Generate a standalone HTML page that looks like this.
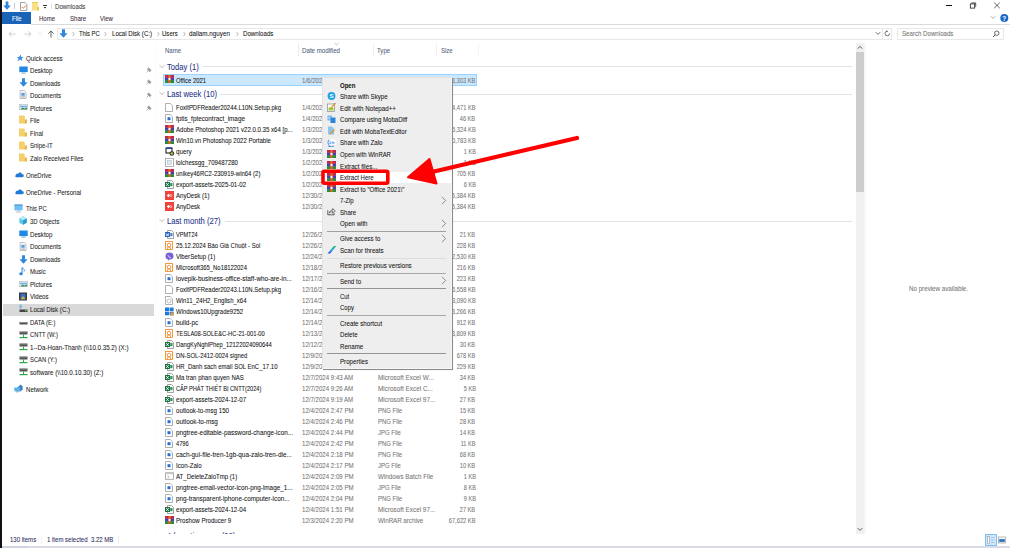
<!DOCTYPE html><html><head><meta charset="utf-8"><style>
html,body{margin:0;padding:0}
body{width:1010px;height:548px;overflow:hidden;position:relative;background:#fff;font-family:'Liberation Sans',sans-serif}
.t{position:absolute;white-space:pre;transform-origin:0 50%;-webkit-text-stroke:0.06px currentColor}
.r{transform-origin:100% 50%}
.b{position:absolute}
#files{position:absolute;left:156px;top:40px;width:700px;height:494px;overflow:hidden}
</style></head><body>
<div class="b" style="left:0px;top:0px;width:2px;height:548px;background:#111"></div>
<svg class="b" style="left:2.5px;top:1px" width="8" height="9" viewBox="0 0 8 9"><path d="M2.6 0.5H5.4V4.5H7.9L4 8.7L0.1 4.5H2.6Z" fill="#2f88e0"/></svg>
<div class="b" style="left:14px;top:3px;width:1px;height:6px;background:#c8c8c8"></div>
<svg class="b" style="left:19.5px;top:2px" width="8" height="9" viewBox="0 0 8 9"><path d="M0.5 0.5H5L6.8 2.3V8.5H0.5Z" fill="#fff" stroke="#8a8a8a" stroke-width="0.8"/><path d="M1.8 5L3.3 6.3L6 3.5" stroke="#e06a3a" stroke-width="0.9" fill="none"/></svg>
<svg class="b" style="left:32px;top:2px" width="8" height="9" viewBox="0 0 8 9"><rect x="0" y="0" width="5.8" height="8.5" fill="#f9df88"/><rect x="0" y="0" width="5.8" height="0.9" fill="#ecc850"/><rect x="5.3" y="4.8" width="1.6" height="3.7" fill="#e8c048"/></svg>
<svg class="b" style="left:42px;top:3px" width="6" height="6" viewBox="0 0 6 6"><rect x="1" y="2" width="4" height="0.9" fill="#222"/><path d="M1.6 4L3 5.5L4.4 4Z" fill="#222"/></svg>
<div class="b" style="left:51px;top:3px;width:1px;height:6px;background:#e4e4e4"></div>
<div class="t" style="left:54.80px;top:1.85px;line-height:10px;font-size:7.4px;color:#3a3a3a;transform:scaleX(0.832);">Downloads</div>
<div class="b" style="left:946px;top:5px;width:6px;height:1px;background:#111"></div>
<svg class="b" style="left:969px;top:2px" width="8" height="7" viewBox="0 0 8 7"><rect x="1.3" y="1.9" width="4.4" height="4.2" fill="none" stroke="#111" stroke-width="0.75"/><path d="M2.4 0.9H6.7V4.9" fill="none" stroke="#111" stroke-width="0.7"/></svg>
<svg class="b" style="left:993px;top:2px" width="8" height="7" viewBox="0 0 8 7"><path d="M1.2 0.6L6.8 6.2M6.8 0.6L1.2 6.2" stroke="#222" stroke-width="0.7"/></svg>
<div class="b" style="left:2px;top:12px;width:29px;height:12px;background:#1a64b8"></div>
<div class="t" style="left:11.50px;top:14.05px;line-height:10px;font-size:7.4px;color:#fff;transform:scaleX(0.808);">File</div>
<div class="t" style="left:38.50px;top:14.25px;line-height:10px;font-size:7.4px;color:#3b2b3b;transform:scaleX(0.819);">Home</div>
<div class="t" style="left:69.60px;top:14.25px;line-height:10px;font-size:7.4px;color:#3b2b3b;transform:scaleX(0.822);">Share</div>
<div class="t" style="left:99.70px;top:14.25px;line-height:10px;font-size:7.4px;color:#3b2b3b;transform:scaleX(0.816);">View</div>
<div class="b" style="left:31px;top:24px;width:979px;height:1px;background:#dadbdc"></div>
<svg class="b" style="left:990px;top:15px" width="6" height="5" viewBox="0 0 6 5"><path d="M0.8 1.2L3 3.4L5.2 1.2" stroke="#8a8a8a" stroke-width="0.7" fill="none"/></svg>
<svg class="b" style="left:1000px;top:14px" width="9" height="8" viewBox="0 0 9 8"><circle cx="4.3" cy="4" r="4" fill="#1769c5"/><text x="4.3" y="6.6" font-size="6.5" font-weight="bold" text-anchor="middle" fill="#fff" font-family="Liberation Sans">?</text></svg>
<svg class="b" style="left:8px;top:31px" width="8" height="6" viewBox="0 0 8 6"><path d="M7.5 3H1M3.5 0.5L1 3L3.5 5.5" stroke="#c4c4c4" stroke-width="0.8" fill="none"/></svg>
<svg class="b" style="left:24px;top:31px" width="8" height="6" viewBox="0 0 8 6"><path d="M0.5 3H7M4.5 0.5L7 3L4.5 5.5" stroke="#c4c4c4" stroke-width="0.8" fill="none"/></svg>
<svg class="b" style="left:38px;top:32px" width="4" height="3" viewBox="0 0 4 3"><path d="M0.3 0.8L2 2.3L3.7 0.8" stroke="#c8c8c8" stroke-width="0.6" fill="none"/></svg>
<svg class="b" style="left:47px;top:30px" width="8" height="8" viewBox="0 0 8 8"><path d="M4 7.5V1M1.3 3.7L4 1L6.7 3.7" stroke="#555" stroke-width="0.9" fill="none"/></svg>
<div class="b" style="left:57px;top:28px;width:835px;height:12px;border:1px solid #e8e8e8;box-sizing:border-box;border-right:none"></div>
<svg class="b" style="left:59px;top:29px" width="9" height="9" viewBox="0 0 9 9"><path d="M3 0.3H6V4.3H8.6L4.5 8.7L0.4 4.3H3Z" fill="#2f88e0"/></svg>
<svg class="b" style="left:71.5px;top:31px" width="3" height="6" viewBox="0 0 3 6"><path d="M0.6 1L2.2 3L0.6 5" stroke="#777" stroke-width="0.55" fill="none"/></svg>
<svg class="b" style="left:104.2px;top:31px" width="3" height="6" viewBox="0 0 3 6"><path d="M0.6 1L2.2 3L0.6 5" stroke="#777" stroke-width="0.55" fill="none"/></svg>
<svg class="b" style="left:156.5px;top:31px" width="3" height="6" viewBox="0 0 3 6"><path d="M0.6 1L2.2 3L0.6 5" stroke="#777" stroke-width="0.55" fill="none"/></svg>
<svg class="b" style="left:182.6px;top:31px" width="3" height="6" viewBox="0 0 3 6"><path d="M0.6 1L2.2 3L0.6 5" stroke="#777" stroke-width="0.55" fill="none"/></svg>
<svg class="b" style="left:236.2px;top:31px" width="3" height="6" viewBox="0 0 3 6"><path d="M0.6 1L2.2 3L0.6 5" stroke="#777" stroke-width="0.55" fill="none"/></svg>
<div class="t" style="left:79.00px;top:29.05px;line-height:10px;font-size:7.4px;color:#111;transform:scaleX(0.787);">This PC</div>
<div class="t" style="left:111.60px;top:29.05px;line-height:10px;font-size:7.4px;color:#111;transform:scaleX(0.826);">Local Disk (C:)</div>
<div class="t" style="left:162.40px;top:29.05px;line-height:10px;font-size:7.4px;color:#111;transform:scaleX(0.819);">Users</div>
<div class="t" style="left:189.10px;top:29.05px;line-height:10px;font-size:7.4px;color:#111;transform:scaleX(0.851);">dailam.nguyen</div>
<div class="t" style="left:242.60px;top:29.05px;line-height:10px;font-size:7.4px;color:#111;transform:scaleX(0.832);">Downloads</div>
<svg class="b" style="left:875px;top:31px" width="6" height="5" viewBox="0 0 6 5"><path d="M0.8 1.2L3 3.4L5.2 1.2" stroke="#444" stroke-width="0.8" fill="none"/></svg>
<div class="b" style="left:882px;top:28px;width:1px;height:12px;background:#e8e8e8"></div>
<svg class="b" style="left:884px;top:30px" width="7" height="7" viewBox="0 0 7 7"><path d="M5.6 3.5A2.3 2.3 0 1 1 3.3 1.2" stroke="#555" stroke-width="0.8" fill="none"/><path d="M2.6 0.2L4 1.2L2.6 2.3" fill="#555"/></svg>
<div class="b" style="left:891px;top:28px;width:1px;height:12px;background:#e8e8e8"></div>
<div class="b" style="left:897px;top:28px;width:107px;height:12px;border:1px solid #e8e8e8;box-sizing:border-box"></div>
<div class="t" style="left:902.30px;top:29.05px;line-height:10px;font-size:7.4px;color:#707070;transform:scaleX(0.829);">Search Downloads</div>
<svg class="b" style="left:992px;top:30px" width="8" height="8" viewBox="0 0 8 8"><circle cx="4.8" cy="3.2" r="2.2" stroke="#444" stroke-width="0.8" fill="none"/><path d="M3.2 4.8L1 7" stroke="#444" stroke-width="0.9"/></svg>
<div class="b" style="left:155px;top:43px;width:1px;height:491px;background:#fbfbfb"></div>
<div class="b" style="left:3px;top:304px;width:151px;height:12px;background:#d9d9d9"></div>
<svg class="b" style="left:15.6px;top:54px" width="8" height="8" viewBox="0 0 8 8"><path d="M4.6 0.6L5.3 2.9L7.6 3.2L5.8 4.6L6.2 7L4.2 5.6L1.4 7.6L2.6 4.5L0.6 3L3.1 2.9Z" fill="#3a8ee6"/></svg>
<div class="t" style="left:25.50px;top:53.55px;line-height:10px;font-size:7.4px;color:#1a1a1a;transform:scaleX(0.832);">Quick access</div>
<svg class="b" style="left:18.8px;top:66px" width="9" height="8" viewBox="0 0 9 8"><rect x="0.3" y="0.5" width="8.4" height="5.6" fill="#1e88e5"/><rect x="2.5" y="6.6" width="4" height="1" fill="#7ab"/></svg>
<div class="t" style="left:29.60px;top:66.25px;line-height:10px;font-size:7.4px;color:#1a1a1a;transform:scaleX(0.827);">Desktop</div>
<svg class="b" style="left:18.8px;top:78px" width="9" height="9" viewBox="0 0 9 9"><path d="M3 0.3H6V4.3H8.6L4.5 8.7L0.4 4.3H3Z" fill="#2f88e0"/></svg>
<div class="t" style="left:29.60px;top:78.55px;line-height:10px;font-size:7.4px;color:#1a1a1a;transform:scaleX(0.832);">Downloads</div>
<svg class="b" style="left:18.8px;top:90px" width="8" height="9" viewBox="0 0 8 9"><path d="M1.2 0.5H5.2L7 2.3V8.5H1.2Z" fill="#fff" stroke="#a0a0a0" stroke-width="0.7"/><rect x="2.3" y="2.8" width="3.4" height="3" fill="#5aa0e0"/><path d="M2.3 7H5.8" stroke="#6a6a6a" stroke-width="0.7"/></svg>
<div class="t" style="left:29.60px;top:91.15px;line-height:10px;font-size:7.4px;color:#1a1a1a;transform:scaleX(0.832);">Documents</div>
<svg class="b" style="left:18.8px;top:104px" width="9" height="6" viewBox="0 0 9 6"><rect x="0.6" y="0.4" width="7.8" height="5.4" fill="#fff" stroke="#b0b0b0" stroke-width="0.6"/><rect x="1.1" y="1.6" width="6.8" height="1.8" fill="#6aaee8"/><path d="M1.1 5.4L3.5 3.4L5.5 4.4L7.9 3.2V5.4Z" fill="#3a8a5a"/></svg>
<div class="t" style="left:29.60px;top:103.65px;line-height:10px;font-size:7.4px;color:#1a1a1a;transform:scaleX(0.828);">Pictures</div>
<svg class="b" style="left:18.8px;top:115px" width="8" height="9" viewBox="0 0 8 9"><path d="M0 0.5H5L5.8 1.5V8.5H0Z" fill="#f5cf6a"/><rect x="5.5" y="4.5" width="2.5" height="4" fill="#e8b84a"/></svg>
<div class="t" style="left:29.60px;top:116.15px;line-height:10px;font-size:7.4px;color:#1a1a1a;transform:scaleX(0.808);">File</div>
<svg class="b" style="left:18.8px;top:128px" width="8" height="9" viewBox="0 0 8 9"><path d="M0 0.5H5L5.8 1.5V8.5H0Z" fill="#f5cf6a"/><rect x="5.5" y="4.5" width="2.5" height="4" fill="#e8b84a"/></svg>
<div class="t" style="left:29.60px;top:128.75px;line-height:10px;font-size:7.4px;color:#1a1a1a;transform:scaleX(0.818);">Final</div>
<svg class="b" style="left:18.8px;top:141px" width="8" height="9" viewBox="0 0 8 9"><path d="M0 0.5H5L5.8 1.5V8.5H0Z" fill="#f5cf6a"/><rect x="5.5" y="4.5" width="2.5" height="4" fill="#e8b84a"/></svg>
<div class="t" style="left:29.60px;top:141.35px;line-height:10px;font-size:7.4px;color:#1a1a1a;transform:scaleX(0.813);">Snipe-IT</div>
<svg class="b" style="left:18.8px;top:153px" width="8" height="9" viewBox="0 0 8 9"><path d="M0 0.5H5L5.8 1.5V8.5H0Z" fill="#f5cf6a"/><rect x="5.5" y="4.5" width="2.5" height="4" fill="#e8b84a"/></svg>
<div class="t" style="left:29.60px;top:154.05px;line-height:10px;font-size:7.4px;color:#1a1a1a;transform:scaleX(0.822);">Zalo Received Files</div>
<svg class="b" style="left:146px;top:67px" width="6" height="6" viewBox="0 0 6 6"><path d="M1.8 1.5L4.5 4.2M2.8 0.8L5.2 3.2L3.6 4.8L1.2 2.4Z" fill="#9a9a9a" stroke="#9a9a9a" stroke-width="0.5"/><path d="M2.2 3.8L0.5 5.5" stroke="#9a9a9a" stroke-width="0.7"/></svg>
<svg class="b" style="left:146px;top:79px" width="6" height="6" viewBox="0 0 6 6"><path d="M1.8 1.5L4.5 4.2M2.8 0.8L5.2 3.2L3.6 4.8L1.2 2.4Z" fill="#9a9a9a" stroke="#9a9a9a" stroke-width="0.5"/><path d="M2.2 3.8L0.5 5.5" stroke="#9a9a9a" stroke-width="0.7"/></svg>
<svg class="b" style="left:146px;top:92px" width="6" height="6" viewBox="0 0 6 6"><path d="M1.8 1.5L4.5 4.2M2.8 0.8L5.2 3.2L3.6 4.8L1.2 2.4Z" fill="#9a9a9a" stroke="#9a9a9a" stroke-width="0.5"/><path d="M2.2 3.8L0.5 5.5" stroke="#9a9a9a" stroke-width="0.7"/></svg>
<svg class="b" style="left:146px;top:105px" width="6" height="6" viewBox="0 0 6 6"><path d="M1.8 1.5L4.5 4.2M2.8 0.8L5.2 3.2L3.6 4.8L1.2 2.4Z" fill="#9a9a9a" stroke="#9a9a9a" stroke-width="0.5"/><path d="M2.2 3.8L0.5 5.5" stroke="#9a9a9a" stroke-width="0.7"/></svg>
<svg class="b" style="left:14.8px;top:171px" width="9" height="7" viewBox="0 0 9 7"><path d="M1.6 6.3C0.5 6.3 0 5.2 0.6 4.4C0.6 3 2 2.4 2.9 2.9C3.6 0.9 6.6 0.8 7 3.1C8.5 3.1 9.2 4.6 8.5 5.6C8.2 6.1 7.8 6.3 7.3 6.3Z" fill="#1f7ad8"/></svg>
<div class="t" style="left:25.80px;top:170.95px;line-height:10px;font-size:7.4px;color:#1a1a1a;transform:scaleX(0.811);">OneDrive</div>
<svg class="b" style="left:14.8px;top:188px" width="9" height="7" viewBox="0 0 9 7"><path d="M1.6 6.3C0.5 6.3 0 5.2 0.6 4.4C0.6 3 2 2.4 2.9 2.9C3.6 0.9 6.6 0.8 7 3.1C8.5 3.1 9.2 4.6 8.5 5.6C8.2 6.1 7.8 6.3 7.3 6.3Z" fill="#1f7ad8"/></svg>
<div class="t" style="left:25.80px;top:187.65px;line-height:10px;font-size:7.4px;color:#1a1a1a;transform:scaleX(0.824);">OneDrive - Personal</div>
<svg class="b" style="left:14.4px;top:204px" width="9" height="9" viewBox="0 0 9 9"><rect x="0.4" y="0.6" width="8.2" height="5.8" fill="#6ec0f4"/><rect x="0.4" y="0.6" width="8.2" height="0.8" fill="#3a7ab8"/><rect x="3.6" y="6.4" width="1.8" height="1.2" fill="#b0b8c0"/><rect x="1.8" y="7.6" width="5.4" height="0.9" fill="#b8c0c8"/></svg>
<div class="t" style="left:25.80px;top:204.25px;line-height:10px;font-size:7.4px;color:#1a1a1a;transform:scaleX(0.787);">This PC</div>
<svg class="b" style="left:18.8px;top:216px" width="8" height="9" viewBox="0 0 8 9"><path d="M4 0.3L7.7 2.2V6.8L4 8.7L0.3 6.8V2.2Z" fill="#5ec8e8"/><path d="M4 4.3V8.7L7.7 6.8V2.2Z" fill="#2a9ad0"/><path d="M0.3 2.2L4 4.3L7.7 2.2L4 0.3Z" fill="#b8ecf8"/></svg>
<div class="t" style="left:29.60px;top:217.15px;line-height:10px;font-size:7.4px;color:#1a1a1a;transform:scaleX(0.806);">3D Objects</div>
<svg class="b" style="left:18.8px;top:230px" width="9" height="8" viewBox="0 0 9 8"><rect x="0.3" y="0.5" width="8.4" height="5.6" fill="#1e88e5"/><rect x="2.5" y="6.6" width="4" height="1" fill="#7ab"/></svg>
<div class="t" style="left:29.60px;top:229.75px;line-height:10px;font-size:7.4px;color:#1a1a1a;transform:scaleX(0.827);">Desktop</div>
<svg class="b" style="left:18.8px;top:242px" width="8" height="9" viewBox="0 0 8 9"><path d="M1.2 0.5H5.2L7 2.3V8.5H1.2Z" fill="#fff" stroke="#a0a0a0" stroke-width="0.7"/><rect x="2.3" y="2.8" width="3.4" height="3" fill="#5aa0e0"/><path d="M2.3 7H5.8" stroke="#6a6a6a" stroke-width="0.7"/></svg>
<div class="t" style="left:29.60px;top:242.25px;line-height:10px;font-size:7.4px;color:#1a1a1a;transform:scaleX(0.832);">Documents</div>
<svg class="b" style="left:18.8px;top:255px" width="9" height="9" viewBox="0 0 9 9"><path d="M3 0.3H6V4.3H8.6L4.5 8.7L0.4 4.3H3Z" fill="#2f88e0"/></svg>
<div class="t" style="left:29.60px;top:254.85px;line-height:10px;font-size:7.4px;color:#1a1a1a;transform:scaleX(0.832);">Downloads</div>
<svg class="b" style="left:18.8px;top:267px" width="7" height="9" viewBox="0 0 7 9"><path d="M3 0.5V6.5" stroke="#2f88e0" stroke-width="1"/><path d="M3 0.5C4.5 1.5 6 2.5 5 4.5" stroke="#2f88e0" stroke-width="0.9" fill="none"/><ellipse cx="2" cy="6.8" rx="1.8" ry="1.5" fill="#2f88e0"/></svg>
<div class="t" style="left:29.60px;top:267.35px;line-height:10px;font-size:7.4px;color:#1a1a1a;transform:scaleX(0.814);">Music</div>
<svg class="b" style="left:18.8px;top:281px" width="9" height="6" viewBox="0 0 9 6"><rect x="0.6" y="0.4" width="7.8" height="5.4" fill="#fff" stroke="#b0b0b0" stroke-width="0.6"/><rect x="1.1" y="1.6" width="6.8" height="1.8" fill="#6aaee8"/><path d="M1.1 5.4L3.5 3.4L5.5 4.4L7.9 3.2V5.4Z" fill="#3a8a5a"/></svg>
<div class="t" style="left:29.60px;top:279.95px;line-height:10px;font-size:7.4px;color:#1a1a1a;transform:scaleX(0.828);">Pictures</div>
<svg class="b" style="left:18.8px;top:292px" width="8" height="9" viewBox="0 0 8 9"><rect x="0" y="0.5" width="8" height="8" fill="#3a3a4a"/><rect x="1.5" y="1.8" width="5" height="5.5" fill="#3a70c0"/><path d="M1.5 7.3L4 4L6.5 7.3Z" fill="#d0b030"/></svg>
<div class="t" style="left:29.60px;top:292.45px;line-height:10px;font-size:7.4px;color:#1a1a1a;transform:scaleX(0.825);">Videos</div>
<svg class="b" style="left:18.8px;top:304px" width="9" height="9" viewBox="0 0 9 9"><path d="M0.5 1H2.5M0.5 2.5H3M0.5 4H2.5" stroke="#2f9ae0" stroke-width="0.7"/><rect x="0.5" y="5.5" width="8" height="2.5" fill="#444"/><rect x="6" y="6.3" width="1.5" height="0.8" fill="#8f8"/></svg>
<div class="t" style="left:29.60px;top:305.05px;line-height:10px;font-size:7.4px;color:#1a1a1a;transform:scaleX(0.826);">Local Disk (C:)</div>
<svg class="b" style="left:18.8px;top:317px" width="9" height="9" viewBox="0 0 9 9"><rect x="0.5" y="5" width="8" height="2.5" fill="#555"/><rect x="0.5" y="5" width="8" height="0.8" fill="#999"/></svg>
<div class="t" style="left:29.60px;top:317.65px;line-height:10px;font-size:7.4px;color:#1a1a1a;transform:scaleX(0.789);">DATA (E:)</div>
<svg class="b" style="left:18.8px;top:330px" width="9" height="9" viewBox="0 0 9 9"><rect x="0.5" y="1.5" width="8" height="3" fill="#555"/><rect x="0.5" y="1.5" width="8" height="0.8" fill="#aaa"/><path d="M4.5 4.5V7" stroke="#2aa84a" stroke-width="1"/><rect x="0.5" y="7" width="8" height="1.2" fill="#2aa84a"/></svg>
<div class="t" style="left:29.60px;top:330.25px;line-height:10px;font-size:7.4px;color:#1a1a1a;transform:scaleX(0.787);">CNTT (W:)</div>
<svg class="b" style="left:18.8px;top:342px" width="9" height="9" viewBox="0 0 9 9"><rect x="0.5" y="1.5" width="8" height="3" fill="#555"/><rect x="0.5" y="1.5" width="8" height="0.8" fill="#aaa"/><path d="M4.5 4.5V7" stroke="#2aa84a" stroke-width="1"/><rect x="0.5" y="7" width="8" height="1.2" fill="#2aa84a"/></svg>
<div class="t" style="left:29.60px;top:342.75px;line-height:10px;font-size:7.4px;color:#1a1a1a;transform:scaleX(0.835);">1--Da-Hoan-Thanh (\\10.0.35.2) (X:)</div>
<svg class="b" style="left:18.8px;top:355px" width="9" height="9" viewBox="0 0 9 9"><rect x="0.5" y="1.5" width="8" height="3" fill="#555"/><rect x="0.5" y="1.5" width="8" height="0.8" fill="#aaa"/><path d="M4.5 4.5V7" stroke="#2aa84a" stroke-width="1"/><rect x="0.5" y="7" width="8" height="1.2" fill="#2aa84a"/></svg>
<div class="t" style="left:29.60px;top:355.35px;line-height:10px;font-size:7.4px;color:#1a1a1a;transform:scaleX(0.788);">SCAN (Y:)</div>
<svg class="b" style="left:18.8px;top:367px" width="9" height="9" viewBox="0 0 9 9"><rect x="0.5" y="1.5" width="8" height="3" fill="#555"/><rect x="0.5" y="1.5" width="8" height="0.8" fill="#aaa"/><path d="M4.5 4.5V7" stroke="#2aa84a" stroke-width="1"/><rect x="0.5" y="7" width="8" height="1.2" fill="#2aa84a"/></svg>
<div class="t" style="left:29.60px;top:367.95px;line-height:10px;font-size:7.4px;color:#1a1a1a;transform:scaleX(0.839);">software (\\10.0.10.30) (Z:)</div>
<svg class="b" style="left:14.4px;top:384px" width="9" height="9" viewBox="0 0 9 9"><path d="M3.8 3.2L6.5 0.5L8.6 2.2V5.8L6.8 7.2H3.8Z" fill="#3a82c0"/><rect x="0.3" y="3.5" width="6" height="3.8" fill="#5ab4ec"/><rect x="2" y="7.4" width="2.6" height="0.9" fill="#8a9aaa"/></svg>
<div class="t" style="left:25.90px;top:384.95px;line-height:10px;font-size:7.4px;color:#1a1a1a;transform:scaleX(0.827);">Network</div>
<div class="t" style="left:165.00px;top:45.55px;line-height:10px;font-size:7.4px;color:#4c607a;transform:scaleX(0.819);">Name</div>
<div class="b" style="left:298px;top:43px;width:1px;height:13px;background:#ececec"></div>
<div class="t" style="left:301.90px;top:45.55px;line-height:10px;font-size:7.4px;color:#4c607a;transform:scaleX(0.834);">Date modified</div>
<svg class="b" style="left:334px;top:42px" width="5" height="4" viewBox="0 0 5 4"><path d="M0.6 1L2.5 2.8L4.4 1" stroke="#999" stroke-width="0.6" fill="none"/></svg>
<div class="b" style="left:373px;top:43px;width:1px;height:13px;background:#f0f0f0"></div>
<div class="t" style="left:377.10px;top:45.55px;line-height:10px;font-size:7.4px;color:#4c607a;transform:scaleX(0.819);">Type</div>
<div class="b" style="left:436px;top:43px;width:1px;height:13px;background:#f0f0f0"></div>
<div class="t" style="left:440.50px;top:45.55px;line-height:10px;font-size:7.4px;color:#4c607a;transform:scaleX(0.812);">Size</div>
<div class="b" style="left:478px;top:43px;width:1px;height:13px;background:#f4f4f4"></div>
<div id="files">
<svg class="b" style="left:3px;top:24px" width="6" height="5" viewBox="0 0 6 5"><path d="M0.6 1.2L3 3.6L5.4 1.2" stroke="#888" stroke-width="0.6" fill="none"/></svg>
<div class="t" style="left:11.00px;top:21.05px;line-height:12px;font-size:8.3px;color:#1e3287;transform:scaleX(0.920);">Today (1)</div>
<div class="b" style="left:47px;top:26px;width:649px;height:1px;background:#e2e2e2"></div>
<div class="b" style="left:7px;top:34px;width:314px;height:12px;background:#cce8ff;border:1px solid #99d1ff;box-sizing:border-box"></div>
<svg class="b" style="left:8.599999999999994px;top:35px" width="9" height="8" viewBox="0 0 9 8"><rect x="0" y="0" width="9" height="2.8" fill="#c02656"/><rect x="0" y="2.8" width="9" height="2.5" fill="#4444b0"/><rect x="0" y="5.3" width="9" height="2.7" fill="#20903a"/><rect x="0" y="2.6" width="9" height="0.5" fill="#6a2040" opacity="0.6"/><rect x="0" y="5.1" width="9" height="0.5" fill="#203a60" opacity="0.6"/><rect x="3.3" y="0" width="2.4" height="8" fill="#e8641c"/><rect x="3.6" y="2.9" width="1.8" height="2.2" fill="#fff"/></svg>
<div class="t" style="left:20.00px;top:35.55px;line-height:10px;font-size:7.4px;color:#111;transform:scaleX(0.797);">Office 2021</div>
<div class="t" style="left:146.00px;top:35.55px;line-height:10px;font-size:7.4px;color:#747474;transform:scaleX(0.826);">1/6/2025 9:12 AM</div>
<div class="t" style="left:221.50px;top:35.55px;line-height:10px;font-size:7.4px;color:#747474;transform:scaleX(0.835);">WinRAR archive</div>
<div class="t r" style="right:380.40px;top:35.55px;line-height:10px;font-size:7.4px;color:#747474;transform:scaleX(0.777);">3,303 KB</div>
<svg class="b" style="left:3px;top:51px" width="6" height="5" viewBox="0 0 6 5"><path d="M0.6 1.2L3 3.6L5.4 1.2" stroke="#888" stroke-width="0.6" fill="none"/></svg>
<div class="t" style="left:11.00px;top:48.35px;line-height:12px;font-size:8.3px;color:#1e3287;transform:scaleX(0.920);">Last week (10)</div>
<div class="b" style="left:64px;top:54px;width:632px;height:1px;background:#e2e2e2"></div>
<svg class="b" style="left:8.599999999999994px;top:63px" width="8" height="9" viewBox="0 0 8 9"><path d="M0.5 0.5H5.2L7.5 2.8V8.5H0.5Z" fill="#fff" stroke="#9a9a9a" stroke-width="0.8"/></svg>
<div class="t" style="left:20.00px;top:63.25px;line-height:10px;font-size:7.4px;color:#111;transform:scaleX(0.804);">FoxitPDFReader20244.L10N.Setup.pkg</div>
<div class="t" style="left:146.00px;top:63.25px;line-height:10px;font-size:7.4px;color:#747474;transform:scaleX(0.826);">1/4/2025 3:20 PM</div>
<div class="t" style="left:221.50px;top:63.25px;line-height:10px;font-size:7.4px;color:#747474;transform:scaleX(0.806);">PKG File</div>
<div class="t r" style="right:380.40px;top:63.25px;line-height:10px;font-size:7.4px;color:#747474;transform:scaleX(0.776);">154,471 KB</div>
<svg class="b" style="left:8.599999999999994px;top:74px" width="8" height="9" viewBox="0 0 8 9"><path d="M0.5 0.5H5.2L7.5 2.8V8.5H0.5Z" fill="#fff" stroke="#9a9a9a" stroke-width="0.8"/><rect x="2.5" y="3.2" width="3" height="3" fill="#1e6fd9"/></svg>
<div class="t" style="left:20.00px;top:74.25px;line-height:10px;font-size:7.4px;color:#111;transform:scaleX(0.856);">fptis_fptecontract_image</div>
<div class="t" style="left:146.00px;top:74.25px;line-height:10px;font-size:7.4px;color:#747474;transform:scaleX(0.825);">1/4/2025 10:02 AM</div>
<div class="t" style="left:221.50px;top:74.25px;line-height:10px;font-size:7.4px;color:#747474;transform:scaleX(0.806);">PNG File</div>
<div class="t r" style="right:380.40px;top:74.25px;line-height:10px;font-size:7.4px;color:#747474;transform:scaleX(0.763);">46 KB</div>
<svg class="b" style="left:8.599999999999994px;top:85px" width="9" height="8" viewBox="0 0 9 8"><rect x="0" y="0" width="9" height="2.8" fill="#c02656"/><rect x="0" y="2.8" width="9" height="2.5" fill="#4444b0"/><rect x="0" y="5.3" width="9" height="2.7" fill="#20903a"/><rect x="0" y="2.6" width="9" height="0.5" fill="#6a2040" opacity="0.6"/><rect x="0" y="5.1" width="9" height="0.5" fill="#203a60" opacity="0.6"/><rect x="3.3" y="0" width="2.4" height="8" fill="#e8641c"/><rect x="3.6" y="2.9" width="1.8" height="2.2" fill="#fff"/></svg>
<div class="t" style="left:20.00px;top:85.25px;line-height:10px;font-size:7.4px;color:#111;transform:scaleX(0.820);">Adobe Photoshop 2021 v22.0.0.35 x64 [p...</div>
<div class="t" style="left:146.00px;top:85.25px;line-height:10px;font-size:7.4px;color:#747474;transform:scaleX(0.826);">1/3/2025 4:10 PM</div>
<div class="t" style="left:221.50px;top:85.25px;line-height:10px;font-size:7.4px;color:#747474;transform:scaleX(0.835);">WinRAR archive</div>
<div class="t r" style="right:380.40px;top:85.25px;line-height:10px;font-size:7.4px;color:#747474;transform:scaleX(0.783);">2,185,324 KB</div>
<svg class="b" style="left:8.599999999999994px;top:96px" width="9" height="8" viewBox="0 0 9 8"><rect x="0" y="0" width="9" height="2.8" fill="#c02656"/><rect x="0" y="2.8" width="9" height="2.5" fill="#4444b0"/><rect x="0" y="5.3" width="9" height="2.7" fill="#20903a"/><rect x="0" y="2.6" width="9" height="0.5" fill="#6a2040" opacity="0.6"/><rect x="0" y="5.1" width="9" height="0.5" fill="#203a60" opacity="0.6"/><rect x="3.3" y="0" width="2.4" height="8" fill="#e8641c"/><rect x="3.6" y="2.9" width="1.8" height="2.2" fill="#fff"/></svg>
<div class="t" style="left:20.00px;top:96.25px;line-height:10px;font-size:7.4px;color:#111;transform:scaleX(0.816);">Win10.vn Photoshop 2022 Portable</div>
<div class="t" style="left:146.00px;top:96.25px;line-height:10px;font-size:7.4px;color:#747474;transform:scaleX(0.826);">1/3/2025 3:42 PM</div>
<div class="t" style="left:221.50px;top:96.25px;line-height:10px;font-size:7.4px;color:#747474;transform:scaleX(0.835);">WinRAR archive</div>
<div class="t r" style="right:380.40px;top:96.25px;line-height:10px;font-size:7.4px;color:#747474;transform:scaleX(0.783);">1,470,783 KB</div>
<svg class="b" style="left:8.599999999999994px;top:107px" width="10" height="9" viewBox="0 0 10 9"><rect x="1" y="1" width="6" height="5" fill="#fff" stroke="#111" stroke-width="1"/><rect x="1.5" y="0.5" width="5.5" height="1.5" fill="#2040a0"/><circle cx="6.8" cy="6.5" r="2.3" fill="#222"/><circle cx="6.8" cy="6.5" r="1.3" fill="#e0d020"/><circle cx="7.6" cy="7" r="0.8" fill="#20b0c0"/></svg>
<div class="t" style="left:20.00px;top:107.25px;line-height:10px;font-size:7.4px;color:#111;transform:scaleX(0.847);">query</div>
<div class="t" style="left:146.00px;top:107.25px;line-height:10px;font-size:7.4px;color:#747474;transform:scaleX(0.825);">1/3/2025 10:21 AM</div>
<div class="t" style="left:221.50px;top:107.25px;line-height:10px;font-size:7.4px;color:#747474;transform:scaleX(0.859);">Microsoft Access</div>
<div class="t r" style="right:380.40px;top:107.25px;line-height:10px;font-size:7.4px;color:#747474;transform:scaleX(0.761);">1 KB</div>
<svg class="b" style="left:8.599999999999994px;top:118px" width="9" height="9" viewBox="0 0 9 9"><rect x="0.5" y="0.5" width="8" height="8" fill="#fff" stroke="#a0a0a0" stroke-width="0.8"/><rect x="2.5" y="2.5" width="4" height="4" fill="#dfe9f3" stroke="#9bb" stroke-width="0.5"/></svg>
<div class="t" style="left:20.00px;top:118.25px;line-height:10px;font-size:7.4px;color:#111;transform:scaleX(0.815);">lolchessgg_709487280</div>
<div class="t" style="left:146.00px;top:118.25px;line-height:10px;font-size:7.4px;color:#747474;transform:scaleX(0.826);">1/2/2025 4:55 PM</div>
<div class="t" style="left:221.50px;top:118.25px;line-height:10px;font-size:7.4px;color:#747474;transform:scaleX(0.866);">Internet Shortcut</div>
<div class="t r" style="right:380.40px;top:118.25px;line-height:10px;font-size:7.4px;color:#747474;transform:scaleX(0.761);">1 KB</div>
<svg class="b" style="left:8.599999999999994px;top:129px" width="9" height="8" viewBox="0 0 9 8"><rect x="0" y="0" width="9" height="2.8" fill="#c02656"/><rect x="0" y="2.8" width="9" height="2.5" fill="#4444b0"/><rect x="0" y="5.3" width="9" height="2.7" fill="#20903a"/><rect x="0" y="2.6" width="9" height="0.5" fill="#6a2040" opacity="0.6"/><rect x="0" y="5.1" width="9" height="0.5" fill="#203a60" opacity="0.6"/><rect x="3.3" y="0" width="2.4" height="8" fill="#e8641c"/><rect x="3.6" y="2.9" width="1.8" height="2.2" fill="#fff"/></svg>
<div class="t" style="left:20.00px;top:129.25px;line-height:10px;font-size:7.4px;color:#111;transform:scaleX(0.809);">unikey46RC2-230919-win64 (2)</div>
<div class="t" style="left:146.00px;top:129.25px;line-height:10px;font-size:7.4px;color:#747474;transform:scaleX(0.825);">1/2/2025 11:03 AM</div>
<div class="t" style="left:221.50px;top:129.25px;line-height:10px;font-size:7.4px;color:#747474;transform:scaleX(0.835);">WinRAR archive</div>
<div class="t r" style="right:380.40px;top:129.25px;line-height:10px;font-size:7.4px;color:#747474;transform:scaleX(0.764);">705 KB</div>
<svg class="b" style="left:8.599999999999994px;top:140px" width="9" height="9" viewBox="0 0 9 9"><path d="M2.5 0.5H6.5L8.5 2.5V8.5H2.5Z" fill="#fff" stroke="#8a8a8a" stroke-width="0.8"/><rect x="0" y="2" width="5" height="5" fill="#1d7044"/><path d="M1.2 3L3.8 6M3.8 3L1.2 6" stroke="#fff" stroke-width="0.8"/><rect x="5.2" y="3" width="2.3" height="3.2" fill="#2a9a5a"/></svg>
<div class="t" style="left:20.00px;top:140.25px;line-height:10px;font-size:7.4px;color:#111;transform:scaleX(0.828);">export-assets-2025-01-02</div>
<div class="t" style="left:146.00px;top:140.25px;line-height:10px;font-size:7.4px;color:#747474;transform:scaleX(0.826);">1/2/2025 9:11 AM</div>
<div class="t" style="left:221.50px;top:140.25px;line-height:10px;font-size:7.4px;color:#747474;transform:scaleX(0.861);">Microsoft Excel C...</div>
<div class="t r" style="right:380.40px;top:140.25px;line-height:10px;font-size:7.4px;color:#747474;transform:scaleX(0.761);">6 KB</div>
<svg class="b" style="left:8.599999999999994px;top:151px" width="9" height="9" viewBox="0 0 9 9"><rect x="0" y="0" width="9" height="9" fill="#ef443b"/><path d="M1.8 4.5L3.5 2.8L5.2 4.5L3.5 6.2Z" fill="#fff"/><path d="M4.6 4.5L5.8 3.3L7 4.5L5.8 5.7Z" fill="none" stroke="#fff" stroke-width="0.7"/></svg>
<div class="t" style="left:20.00px;top:151.25px;line-height:10px;font-size:7.4px;color:#111;transform:scaleX(0.823);">AnyDesk (1)</div>
<div class="t" style="left:146.00px;top:151.25px;line-height:10px;font-size:7.4px;color:#747474;transform:scaleX(0.824);">12/30/2024 2:10 PM</div>
<div class="t" style="left:221.50px;top:151.25px;line-height:10px;font-size:7.4px;color:#747474;transform:scaleX(0.866);">Application</div>
<div class="t r" style="right:380.40px;top:151.25px;line-height:10px;font-size:7.4px;color:#747474;transform:scaleX(0.777);">5,384 KB</div>
<svg class="b" style="left:8.599999999999994px;top:162px" width="9" height="9" viewBox="0 0 9 9"><rect x="0" y="0" width="9" height="9" fill="#ef443b"/><path d="M1.8 4.5L3.5 2.8L5.2 4.5L3.5 6.2Z" fill="#fff"/><path d="M4.6 4.5L5.8 3.3L7 4.5L5.8 5.7Z" fill="none" stroke="#fff" stroke-width="0.7"/></svg>
<div class="t" style="left:20.00px;top:162.25px;line-height:10px;font-size:7.4px;color:#111;transform:scaleX(0.812);">AnyDesk</div>
<div class="t" style="left:146.00px;top:162.25px;line-height:10px;font-size:7.4px;color:#747474;transform:scaleX(0.824);">12/30/2024 2:08 PM</div>
<div class="t" style="left:221.50px;top:162.25px;line-height:10px;font-size:7.4px;color:#747474;transform:scaleX(0.866);">Application</div>
<div class="t r" style="right:380.40px;top:162.25px;line-height:10px;font-size:7.4px;color:#747474;transform:scaleX(0.777);">5,384 KB</div>
<svg class="b" style="left:3px;top:178px" width="6" height="5" viewBox="0 0 6 5"><path d="M0.6 1.2L3 3.6L5.4 1.2" stroke="#888" stroke-width="0.6" fill="none"/></svg>
<div class="t" style="left:11.00px;top:175.45px;line-height:12px;font-size:8.3px;color:#1e3287;transform:scaleX(0.920);">Last month (27)</div>
<div class="b" style="left:69px;top:181px;width:627px;height:1px;background:#e2e2e2"></div>
<svg class="b" style="left:8.599999999999994px;top:190px" width="9" height="9" viewBox="0 0 9 9"><path d="M2.5 0.5H6.5L8.5 2.5V8.5H2.5Z" fill="#fff" stroke="#8a8a8a" stroke-width="0.8"/><rect x="0" y="2" width="5" height="5" fill="#2b5fb8"/><path d="M1 3L1.8 6L2.5 4L3.2 6L4 3" stroke="#fff" stroke-width="0.6" fill="none"/><rect x="5.2" y="3" width="2.3" height="3.2" fill="#4a86d8"/></svg>
<div class="t" style="left:20.00px;top:190.25px;line-height:10px;font-size:7.4px;color:#111;transform:scaleX(0.752);">VPMT24</div>
<div class="t" style="left:146.00px;top:190.25px;line-height:10px;font-size:7.4px;color:#747474;transform:scaleX(0.824);">12/26/2024 3:12 PM</div>
<div class="t" style="left:221.50px;top:190.25px;line-height:10px;font-size:7.4px;color:#747474;transform:scaleX(0.857);">Microsoft Word D...</div>
<div class="t r" style="right:380.40px;top:190.25px;line-height:10px;font-size:7.4px;color:#747474;transform:scaleX(0.763);">21 KB</div>
<svg class="b" style="left:8.599999999999994px;top:201px" width="8" height="9" viewBox="0 0 8 9"><path d="M0.5 0.5H7.5V8.5H0.5Z" fill="#fff" stroke="#f08a2a" stroke-width="0.9"/><circle cx="4" cy="4" r="1.8" fill="none" stroke="#f08a2a" stroke-width="0.9"/><path d="M2.5 8V6.2H5.5V8" fill="none" stroke="#f08a2a" stroke-width="0.8"/></svg>
<div class="t" style="left:20.00px;top:201.25px;line-height:10px;font-size:7.4px;color:#111;transform:scaleX(0.805);">25.12.2024 Báo Giá Chuột - Sol</div>
<div class="t" style="left:146.00px;top:201.25px;line-height:10px;font-size:7.4px;color:#747474;transform:scaleX(0.824);">12/26/2024 9:45 AM</div>
<div class="t" style="left:221.50px;top:201.25px;line-height:10px;font-size:7.4px;color:#747474;transform:scaleX(0.848);">Foxit PDF Reader...</div>
<div class="t r" style="right:380.40px;top:201.25px;line-height:10px;font-size:7.4px;color:#747474;transform:scaleX(0.764);">228 KB</div>
<svg class="b" style="left:8.599999999999994px;top:212px" width="9" height="9" viewBox="0 0 9 9"><path d="M4.5 0.6C7 0.6 8.5 1.8 8.5 4.2C8.5 6.6 7 7.6 4.5 7.6L3 8.8V7.4C1.2 6.9 0.5 5.8 0.5 4.2C0.5 1.8 2 0.6 4.5 0.6Z" fill="#7b61d6"/><path d="M3 3.2C3.5 4.8 4.4 5.6 6 6" stroke="#fff" stroke-width="0.8" fill="none"/></svg>
<div class="t" style="left:20.00px;top:212.25px;line-height:10px;font-size:7.4px;color:#111;transform:scaleX(0.827);">ViberSetup (1)</div>
<div class="t" style="left:146.00px;top:212.25px;line-height:10px;font-size:7.4px;color:#747474;transform:scaleX(0.824);">12/24/2024 4:20 PM</div>
<div class="t" style="left:221.50px;top:212.25px;line-height:10px;font-size:7.4px;color:#747474;transform:scaleX(0.866);">Application</div>
<div class="t r" style="right:380.40px;top:212.25px;line-height:10px;font-size:7.4px;color:#747474;transform:scaleX(0.776);">102,530 KB</div>
<svg class="b" style="left:8.599999999999994px;top:223px" width="8" height="9" viewBox="0 0 8 9"><path d="M0.5 0.5H7.5V8.5H0.5Z" fill="#fff" stroke="#f08a2a" stroke-width="0.9"/><circle cx="4" cy="4" r="1.8" fill="none" stroke="#f08a2a" stroke-width="0.9"/><path d="M2.5 8V6.2H5.5V8" fill="none" stroke="#f08a2a" stroke-width="0.8"/></svg>
<div class="t" style="left:20.00px;top:223.25px;line-height:10px;font-size:7.4px;color:#111;transform:scaleX(0.799);">Microsoft365_No18122024</div>
<div class="t" style="left:146.00px;top:223.25px;line-height:10px;font-size:7.4px;color:#747474;transform:scaleX(0.824);">12/18/2024 2:31 PM</div>
<div class="t" style="left:221.50px;top:223.25px;line-height:10px;font-size:7.4px;color:#747474;transform:scaleX(0.848);">Foxit PDF Reader...</div>
<div class="t r" style="right:380.40px;top:223.25px;line-height:10px;font-size:7.4px;color:#747474;transform:scaleX(0.764);">216 KB</div>
<svg class="b" style="left:8.599999999999994px;top:234px" width="8" height="9" viewBox="0 0 8 9"><path d="M0.5 0.5H5.2L7.5 2.8V8.5H0.5Z" fill="#fff" stroke="#9a9a9a" stroke-width="0.8"/><rect x="2.5" y="3.2" width="3" height="3" fill="#1e6fd9"/></svg>
<div class="t" style="left:20.00px;top:234.25px;line-height:10px;font-size:7.4px;color:#111;transform:scaleX(0.861);">lovepik-business-office-staff-who-are-in...</div>
<div class="t" style="left:146.00px;top:234.25px;line-height:10px;font-size:7.4px;color:#747474;transform:scaleX(0.823);">12/17/2024 10:11 AM</div>
<div class="t" style="left:221.50px;top:234.25px;line-height:10px;font-size:7.4px;color:#747474;transform:scaleX(0.808);">JPG File</div>
<div class="t r" style="right:380.40px;top:234.25px;line-height:10px;font-size:7.4px;color:#747474;transform:scaleX(0.764);">223 KB</div>
<svg class="b" style="left:8.599999999999994px;top:245px" width="8" height="9" viewBox="0 0 8 9"><path d="M0.5 0.5H5.2L7.5 2.8V8.5H0.5Z" fill="#fff" stroke="#9a9a9a" stroke-width="0.8"/></svg>
<div class="t" style="left:20.00px;top:245.25px;line-height:10px;font-size:7.4px;color:#111;transform:scaleX(0.804);">FoxitPDFReader20243.L10N.Setup.pkg</div>
<div class="t" style="left:146.00px;top:245.25px;line-height:10px;font-size:7.4px;color:#747474;transform:scaleX(0.824);">12/16/2024 3:40 PM</div>
<div class="t" style="left:221.50px;top:245.25px;line-height:10px;font-size:7.4px;color:#747474;transform:scaleX(0.806);">PKG File</div>
<div class="t r" style="right:380.40px;top:245.25px;line-height:10px;font-size:7.4px;color:#747474;transform:scaleX(0.776);">146,558 KB</div>
<svg class="b" style="left:8.599999999999994px;top:256px" width="8" height="9" viewBox="0 0 8 9"><path d="M0.5 0.5H5.2L7.5 2.8V8.5H0.5Z" fill="#fff" stroke="#9a9a9a" stroke-width="0.8"/><circle cx="4" cy="5" r="2" fill="none" stroke="#b0b0b0" stroke-width="0.8"/></svg>
<div class="t" style="left:20.00px;top:256.25px;line-height:10px;font-size:7.4px;color:#111;transform:scaleX(0.815);">Win11_24H2_English_x64</div>
<div class="t" style="left:146.00px;top:256.25px;line-height:10px;font-size:7.4px;color:#747474;transform:scaleX(0.823);">12/14/2024 11:20 AM</div>
<div class="t" style="left:221.50px;top:256.25px;line-height:10px;font-size:7.4px;color:#747474;transform:scaleX(0.853);">Disc Image File</div>
<div class="t r" style="right:380.40px;top:256.25px;line-height:10px;font-size:7.4px;color:#747474;transform:scaleX(0.783);">5,683,090 KB</div>
<svg class="b" style="left:8.599999999999994px;top:267px" width="9" height="9" viewBox="0 0 9 9"><rect x="0" y="0.5" width="4" height="3.6" fill="#1e78d6"/><rect x="4.6" y="0.5" width="4" height="3.6" fill="#1e78d6"/><rect x="0" y="4.7" width="4" height="3.6" fill="#1e78d6"/><rect x="4.6" y="4.7" width="4" height="3.6" fill="#1e78d6"/><rect x="5.5" y="5.5" width="3" height="3" fill="#e0a030"/></svg>
<div class="t" style="left:20.00px;top:267.25px;line-height:10px;font-size:7.4px;color:#111;transform:scaleX(0.809);">Windows10Upgrade9252</div>
<div class="t" style="left:146.00px;top:267.25px;line-height:10px;font-size:7.4px;color:#747474;transform:scaleX(0.823);">12/14/2024 10:50 AM</div>
<div class="t" style="left:221.50px;top:267.25px;line-height:10px;font-size:7.4px;color:#747474;transform:scaleX(0.866);">Application</div>
<div class="t r" style="right:380.40px;top:267.25px;line-height:10px;font-size:7.4px;color:#747474;transform:scaleX(0.777);">3,266 KB</div>
<svg class="b" style="left:8.599999999999994px;top:278px" width="8" height="9" viewBox="0 0 8 9"><path d="M0.5 0.5H5.2L7.5 2.8V8.5H0.5Z" fill="#fff" stroke="#9a9a9a" stroke-width="0.8"/><rect x="2.5" y="3.2" width="3" height="3" fill="#1e6fd9"/></svg>
<div class="t" style="left:20.00px;top:278.25px;line-height:10px;font-size:7.4px;color:#111;transform:scaleX(0.856);">build-pc</div>
<div class="t" style="left:146.00px;top:278.25px;line-height:10px;font-size:7.4px;color:#747474;transform:scaleX(0.824);">12/14/2024 9:31 AM</div>
<div class="t" style="left:221.50px;top:278.25px;line-height:10px;font-size:7.4px;color:#747474;transform:scaleX(0.806);">PNG File</div>
<div class="t r" style="right:380.40px;top:278.25px;line-height:10px;font-size:7.4px;color:#747474;transform:scaleX(0.764);">912 KB</div>
<svg class="b" style="left:8.599999999999994px;top:289px" width="8" height="9" viewBox="0 0 8 9"><path d="M0.5 0.5H7.5V8.5H0.5Z" fill="#fff" stroke="#f08a2a" stroke-width="0.9"/><circle cx="4" cy="4" r="1.8" fill="none" stroke="#f08a2a" stroke-width="0.9"/><path d="M2.5 8V6.2H5.5V8" fill="none" stroke="#f08a2a" stroke-width="0.8"/></svg>
<div class="t" style="left:20.00px;top:289.25px;line-height:10px;font-size:7.4px;color:#111;transform:scaleX(0.783);">TESLA08-SOLE&amp;C-HC-21-001-00</div>
<div class="t" style="left:146.00px;top:289.25px;line-height:10px;font-size:7.4px;color:#747474;transform:scaleX(0.824);">12/13/2024 4:01 PM</div>
<div class="t" style="left:221.50px;top:289.25px;line-height:10px;font-size:7.4px;color:#747474;transform:scaleX(0.848);">Foxit PDF Reader...</div>
<div class="t r" style="right:380.40px;top:289.25px;line-height:10px;font-size:7.4px;color:#747474;transform:scaleX(0.777);">3,809 KB</div>
<svg class="b" style="left:8.599999999999994px;top:300px" width="9" height="9" viewBox="0 0 9 9"><path d="M2.5 0.5H6.5L8.5 2.5V8.5H2.5Z" fill="#fff" stroke="#8a8a8a" stroke-width="0.8"/><rect x="0" y="2" width="5" height="5" fill="#1d7044"/><path d="M1.2 3L3.8 6M3.8 3L1.2 6" stroke="#fff" stroke-width="0.8"/><rect x="5.2" y="3" width="2.3" height="3.2" fill="#2a9a5a"/></svg>
<div class="t" style="left:20.00px;top:300.25px;line-height:10px;font-size:7.4px;color:#111;transform:scaleX(0.796);">DangKyNghiPhep_12122024090644</div>
<div class="t" style="left:146.00px;top:300.25px;line-height:10px;font-size:7.4px;color:#747474;transform:scaleX(0.824);">12/12/2024 9:06 AM</div>
<div class="t" style="left:221.50px;top:300.25px;line-height:10px;font-size:7.4px;color:#747474;transform:scaleX(0.858);">Microsoft Excel W...</div>
<div class="t r" style="right:380.40px;top:300.25px;line-height:10px;font-size:7.4px;color:#747474;transform:scaleX(0.763);">30 KB</div>
<svg class="b" style="left:8.599999999999994px;top:311px" width="8" height="9" viewBox="0 0 8 9"><path d="M0.5 0.5H7.5V8.5H0.5Z" fill="#fff" stroke="#f08a2a" stroke-width="0.9"/><circle cx="4" cy="4" r="1.8" fill="none" stroke="#f08a2a" stroke-width="0.9"/><path d="M2.5 8V6.2H5.5V8" fill="none" stroke="#f08a2a" stroke-width="0.8"/></svg>
<div class="t" style="left:20.00px;top:311.25px;line-height:10px;font-size:7.4px;color:#111;transform:scaleX(0.797);">DN-SOL-2412-0024 signed</div>
<div class="t" style="left:146.00px;top:311.25px;line-height:10px;font-size:7.4px;color:#747474;transform:scaleX(0.825);">12/9/2024 2:12 PM</div>
<div class="t" style="left:221.50px;top:311.25px;line-height:10px;font-size:7.4px;color:#747474;transform:scaleX(0.848);">Foxit PDF Reader...</div>
<div class="t r" style="right:380.40px;top:311.25px;line-height:10px;font-size:7.4px;color:#747474;transform:scaleX(0.764);">678 KB</div>
<svg class="b" style="left:8.599999999999994px;top:322px" width="9" height="9" viewBox="0 0 9 9"><path d="M2.5 0.5H6.5L8.5 2.5V8.5H2.5Z" fill="#fff" stroke="#8a8a8a" stroke-width="0.8"/><rect x="0" y="2" width="5" height="5" fill="#1d7044"/><path d="M1.2 3L3.8 6M3.8 3L1.2 6" stroke="#fff" stroke-width="0.8"/><rect x="5.2" y="3" width="2.3" height="3.2" fill="#2a9a5a"/></svg>
<div class="t" style="left:20.00px;top:322.25px;line-height:10px;font-size:7.4px;color:#111;transform:scaleX(0.809);">HR_Danh sach email SOL EnC_17.10</div>
<div class="t" style="left:146.00px;top:322.25px;line-height:10px;font-size:7.4px;color:#747474;transform:scaleX(0.824);">12/9/2024 10:03 AM</div>
<div class="t" style="left:221.50px;top:322.25px;line-height:10px;font-size:7.4px;color:#747474;transform:scaleX(0.858);">Microsoft Excel W...</div>
<div class="t r" style="right:380.40px;top:322.25px;line-height:10px;font-size:7.4px;color:#747474;transform:scaleX(0.764);">229 KB</div>
<svg class="b" style="left:8.599999999999994px;top:333px" width="9" height="9" viewBox="0 0 9 9"><path d="M2.5 0.5H6.5L8.5 2.5V8.5H2.5Z" fill="#fff" stroke="#8a8a8a" stroke-width="0.8"/><rect x="0" y="2" width="5" height="5" fill="#1d7044"/><path d="M1.2 3L3.8 6M3.8 3L1.2 6" stroke="#fff" stroke-width="0.8"/><rect x="5.2" y="3" width="2.3" height="3.2" fill="#2a9a5a"/></svg>
<div class="t" style="left:20.00px;top:333.25px;line-height:10px;font-size:7.4px;color:#111;transform:scaleX(0.817);">Ma tran phan quyen NAS</div>
<div class="t" style="left:146.00px;top:333.25px;line-height:10px;font-size:7.4px;color:#747474;transform:scaleX(0.825);">12/7/2024 9:43 AM</div>
<div class="t" style="left:221.50px;top:333.25px;line-height:10px;font-size:7.4px;color:#747474;transform:scaleX(0.858);">Microsoft Excel W...</div>
<div class="t r" style="right:380.40px;top:333.25px;line-height:10px;font-size:7.4px;color:#747474;transform:scaleX(0.763);">34 KB</div>
<svg class="b" style="left:8.599999999999994px;top:344px" width="9" height="9" viewBox="0 0 9 9"><path d="M2.5 0.5H6.5L8.5 2.5V8.5H2.5Z" fill="#fff" stroke="#8a8a8a" stroke-width="0.8"/><rect x="0" y="2" width="5" height="5" fill="#1d7044"/><path d="M1.2 3L3.8 6M3.8 3L1.2 6" stroke="#fff" stroke-width="0.8"/><rect x="5.2" y="3" width="2.3" height="3.2" fill="#2a9a5a"/></svg>
<div class="t" style="left:20.00px;top:344.25px;line-height:10px;font-size:7.4px;color:#111;transform:scaleX(0.762);">CẤP PHÁT THIẾT BỊ CNTT(2024)</div>
<div class="t" style="left:146.00px;top:344.25px;line-height:10px;font-size:7.4px;color:#747474;transform:scaleX(0.825);">12/7/2024 9:26 AM</div>
<div class="t" style="left:221.50px;top:344.25px;line-height:10px;font-size:7.4px;color:#747474;transform:scaleX(0.861);">Microsoft Excel C...</div>
<div class="t r" style="right:380.40px;top:344.25px;line-height:10px;font-size:7.4px;color:#747474;transform:scaleX(0.761);">5 KB</div>
<svg class="b" style="left:8.599999999999994px;top:355px" width="9" height="9" viewBox="0 0 9 9"><path d="M2.5 0.5H6.5L8.5 2.5V8.5H2.5Z" fill="#fff" stroke="#8a8a8a" stroke-width="0.8"/><rect x="0" y="2" width="5" height="5" fill="#1d7044"/><path d="M1.2 3L3.8 6M3.8 3L1.2 6" stroke="#fff" stroke-width="0.8"/><rect x="5.2" y="3" width="2.3" height="3.2" fill="#2a9a5a"/></svg>
<div class="t" style="left:20.00px;top:355.25px;line-height:10px;font-size:7.4px;color:#111;transform:scaleX(0.828);">export-assets-2024-12-07</div>
<div class="t" style="left:146.00px;top:355.25px;line-height:10px;font-size:7.4px;color:#747474;transform:scaleX(0.825);">12/7/2024 9:19 AM</div>
<div class="t" style="left:221.50px;top:355.25px;line-height:10px;font-size:7.4px;color:#747474;transform:scaleX(0.860);">Microsoft Excel 97...</div>
<div class="t r" style="right:380.40px;top:355.25px;line-height:10px;font-size:7.4px;color:#747474;transform:scaleX(0.763);">27 KB</div>
<svg class="b" style="left:8.599999999999994px;top:366px" width="8" height="9" viewBox="0 0 8 9"><path d="M0.5 0.5H5.2L7.5 2.8V8.5H0.5Z" fill="#fff" stroke="#9a9a9a" stroke-width="0.8"/><rect x="2.5" y="3.2" width="3" height="3" fill="#1e6fd9"/></svg>
<div class="t" style="left:20.00px;top:366.25px;line-height:10px;font-size:7.4px;color:#111;transform:scaleX(0.838);">outlook-to-msg 150</div>
<div class="t" style="left:146.00px;top:366.25px;line-height:10px;font-size:7.4px;color:#747474;transform:scaleX(0.825);">12/4/2024 2:47 PM</div>
<div class="t" style="left:221.50px;top:366.25px;line-height:10px;font-size:7.4px;color:#747474;transform:scaleX(0.806);">PNG File</div>
<div class="t r" style="right:380.40px;top:366.25px;line-height:10px;font-size:7.4px;color:#747474;transform:scaleX(0.763);">15 KB</div>
<svg class="b" style="left:8.599999999999994px;top:377px" width="8" height="9" viewBox="0 0 8 9"><path d="M0.5 0.5H5.2L7.5 2.8V8.5H0.5Z" fill="#fff" stroke="#9a9a9a" stroke-width="0.8"/><rect x="2.5" y="3.2" width="3" height="3" fill="#1e6fd9"/></svg>
<div class="t" style="left:20.00px;top:377.25px;line-height:10px;font-size:7.4px;color:#111;transform:scaleX(0.856);">outlook-to-msg</div>
<div class="t" style="left:146.00px;top:377.25px;line-height:10px;font-size:7.4px;color:#747474;transform:scaleX(0.825);">12/4/2024 2:46 PM</div>
<div class="t" style="left:221.50px;top:377.25px;line-height:10px;font-size:7.4px;color:#747474;transform:scaleX(0.806);">PNG File</div>
<div class="t r" style="right:380.40px;top:377.25px;line-height:10px;font-size:7.4px;color:#747474;transform:scaleX(0.763);">28 KB</div>
<svg class="b" style="left:8.599999999999994px;top:388px" width="8" height="9" viewBox="0 0 8 9"><path d="M0.5 0.5H5.2L7.5 2.8V8.5H0.5Z" fill="#fff" stroke="#9a9a9a" stroke-width="0.8"/><rect x="2.5" y="3.2" width="3" height="3" fill="#1e6fd9"/></svg>
<div class="t" style="left:20.00px;top:388.25px;line-height:10px;font-size:7.4px;color:#111;transform:scaleX(0.858);">pngtree-editable-password-change-icon...</div>
<div class="t" style="left:146.00px;top:388.25px;line-height:10px;font-size:7.4px;color:#747474;transform:scaleX(0.825);">12/4/2024 2:44 PM</div>
<div class="t" style="left:221.50px;top:388.25px;line-height:10px;font-size:7.4px;color:#747474;transform:scaleX(0.808);">JPG File</div>
<div class="t r" style="right:380.40px;top:388.25px;line-height:10px;font-size:7.4px;color:#747474;transform:scaleX(0.763);">14 KB</div>
<svg class="b" style="left:8.599999999999994px;top:399px" width="8" height="9" viewBox="0 0 8 9"><path d="M0.5 0.5H5.2L7.5 2.8V8.5H0.5Z" fill="#fff" stroke="#9a9a9a" stroke-width="0.8"/><rect x="2.5" y="3.2" width="3" height="3" fill="#1e6fd9"/></svg>
<div class="t" style="left:20.00px;top:399.25px;line-height:10px;font-size:7.4px;color:#111;transform:scaleX(0.771);">4796</div>
<div class="t" style="left:146.00px;top:399.25px;line-height:10px;font-size:7.4px;color:#747474;transform:scaleX(0.825);">12/4/2024 2:42 PM</div>
<div class="t" style="left:221.50px;top:399.25px;line-height:10px;font-size:7.4px;color:#747474;transform:scaleX(0.806);">PNG File</div>
<div class="t r" style="right:380.40px;top:399.25px;line-height:10px;font-size:7.4px;color:#747474;transform:scaleX(0.763);">11 KB</div>
<svg class="b" style="left:8.599999999999994px;top:410px" width="8" height="9" viewBox="0 0 8 9"><path d="M0.5 0.5H5.2L7.5 2.8V8.5H0.5Z" fill="#fff" stroke="#9a9a9a" stroke-width="0.8"/><rect x="2.5" y="3.2" width="3" height="3" fill="#1e6fd9"/></svg>
<div class="t" style="left:20.00px;top:410.25px;line-height:10px;font-size:7.4px;color:#111;transform:scaleX(0.862);">cach-gui-file-tren-1gb-qua-zalo-tren-die...</div>
<div class="t" style="left:146.00px;top:410.25px;line-height:10px;font-size:7.4px;color:#747474;transform:scaleX(0.825);">12/4/2024 2:18 PM</div>
<div class="t" style="left:221.50px;top:410.25px;line-height:10px;font-size:7.4px;color:#747474;transform:scaleX(0.806);">PNG File</div>
<div class="t r" style="right:380.40px;top:410.25px;line-height:10px;font-size:7.4px;color:#747474;transform:scaleX(0.763);">68 KB</div>
<svg class="b" style="left:8.599999999999994px;top:421px" width="8" height="9" viewBox="0 0 8 9"><path d="M0.5 0.5H5.2L7.5 2.8V8.5H0.5Z" fill="#fff" stroke="#9a9a9a" stroke-width="0.8"/><rect x="2.5" y="3.2" width="3" height="3" fill="#1e6fd9"/></svg>
<div class="t" style="left:20.00px;top:421.25px;line-height:10px;font-size:7.4px;color:#111;transform:scaleX(0.833);">Icon-Zalo</div>
<div class="t" style="left:146.00px;top:421.25px;line-height:10px;font-size:7.4px;color:#747474;transform:scaleX(0.825);">12/4/2024 2:17 PM</div>
<div class="t" style="left:221.50px;top:421.25px;line-height:10px;font-size:7.4px;color:#747474;transform:scaleX(0.808);">JPG File</div>
<div class="t r" style="right:380.40px;top:421.25px;line-height:10px;font-size:7.4px;color:#747474;transform:scaleX(0.763);">10 KB</div>
<svg class="b" style="left:8.599999999999994px;top:432px" width="9" height="8" viewBox="0 0 9 8"><rect x="0.5" y="0.8" width="8" height="6.5" fill="#fff" stroke="#9a9a9a" stroke-width="0.8"/><rect x="0.5" y="0.8" width="8" height="1.4" fill="#c8c8c8"/><path d="M2.5 4L4 5L2.5 6" stroke="#888" stroke-width="0.6" fill="none"/></svg>
<div class="t" style="left:20.00px;top:432.25px;line-height:10px;font-size:7.4px;color:#111;transform:scaleX(0.821);">AT_DeleteZaloTmp (1)</div>
<div class="t" style="left:146.00px;top:432.25px;line-height:10px;font-size:7.4px;color:#747474;transform:scaleX(0.825);">12/4/2024 2:09 PM</div>
<div class="t" style="left:221.50px;top:432.25px;line-height:10px;font-size:7.4px;color:#747474;transform:scaleX(0.852);">Windows Batch File</div>
<div class="t r" style="right:380.40px;top:432.25px;line-height:10px;font-size:7.4px;color:#747474;transform:scaleX(0.761);">1 KB</div>
<svg class="b" style="left:8.599999999999994px;top:443px" width="8" height="9" viewBox="0 0 8 9"><path d="M0.5 0.5H5.2L7.5 2.8V8.5H0.5Z" fill="#fff" stroke="#9a9a9a" stroke-width="0.8"/><rect x="2.5" y="3.2" width="3" height="3" fill="#1e6fd9"/></svg>
<div class="t" style="left:20.00px;top:443.25px;line-height:10px;font-size:7.4px;color:#111;transform:scaleX(0.860);">pngtree-email-vector-icon-png-image_1...</div>
<div class="t" style="left:146.00px;top:443.25px;line-height:10px;font-size:7.4px;color:#747474;transform:scaleX(0.825);">12/4/2024 2:05 PM</div>
<div class="t" style="left:221.50px;top:443.25px;line-height:10px;font-size:7.4px;color:#747474;transform:scaleX(0.808);">JPG File</div>
<div class="t r" style="right:380.40px;top:443.25px;line-height:10px;font-size:7.4px;color:#747474;transform:scaleX(0.761);">8 KB</div>
<svg class="b" style="left:8.599999999999994px;top:454px" width="8" height="9" viewBox="0 0 8 9"><path d="M0.5 0.5H5.2L7.5 2.8V8.5H0.5Z" fill="#fff" stroke="#9a9a9a" stroke-width="0.8"/><rect x="2.5" y="3.2" width="3" height="3" fill="#1e6fd9"/></svg>
<div class="t" style="left:20.00px;top:454.25px;line-height:10px;font-size:7.4px;color:#111;transform:scaleX(0.858);">png-transparent-iphone-computer-icon...</div>
<div class="t" style="left:146.00px;top:454.25px;line-height:10px;font-size:7.4px;color:#747474;transform:scaleX(0.825);">12/4/2024 2:04 PM</div>
<div class="t" style="left:221.50px;top:454.25px;line-height:10px;font-size:7.4px;color:#747474;transform:scaleX(0.806);">PNG File</div>
<div class="t r" style="right:380.40px;top:454.25px;line-height:10px;font-size:7.4px;color:#747474;transform:scaleX(0.761);">9 KB</div>
<svg class="b" style="left:8.599999999999994px;top:465px" width="9" height="9" viewBox="0 0 9 9"><path d="M2.5 0.5H6.5L8.5 2.5V8.5H2.5Z" fill="#fff" stroke="#8a8a8a" stroke-width="0.8"/><rect x="0" y="2" width="5" height="5" fill="#1d7044"/><path d="M1.2 3L3.8 6M3.8 3L1.2 6" stroke="#fff" stroke-width="0.8"/><rect x="5.2" y="3" width="2.3" height="3.2" fill="#2a9a5a"/></svg>
<div class="t" style="left:20.00px;top:465.25px;line-height:10px;font-size:7.4px;color:#111;transform:scaleX(0.828);">export-assets-2024-12-04</div>
<div class="t" style="left:146.00px;top:465.25px;line-height:10px;font-size:7.4px;color:#747474;transform:scaleX(0.825);">12/4/2024 1:51 PM</div>
<div class="t" style="left:221.50px;top:465.25px;line-height:10px;font-size:7.4px;color:#747474;transform:scaleX(0.860);">Microsoft Excel 97...</div>
<div class="t r" style="right:380.40px;top:465.25px;line-height:10px;font-size:7.4px;color:#747474;transform:scaleX(0.763);">27 KB</div>
<svg class="b" style="left:8.599999999999994px;top:476px" width="9" height="8" viewBox="0 0 9 8"><rect x="0" y="0" width="9" height="2.8" fill="#c02656"/><rect x="0" y="2.8" width="9" height="2.5" fill="#4444b0"/><rect x="0" y="5.3" width="9" height="2.7" fill="#20903a"/><rect x="0" y="2.6" width="9" height="0.5" fill="#6a2040" opacity="0.6"/><rect x="0" y="5.1" width="9" height="0.5" fill="#203a60" opacity="0.6"/><rect x="3.3" y="0" width="2.4" height="8" fill="#e8641c"/><rect x="3.6" y="2.9" width="1.8" height="2.2" fill="#fff"/></svg>
<div class="t" style="left:20.00px;top:476.25px;line-height:10px;font-size:7.4px;color:#111;transform:scaleX(0.825);">Proshow Producer 9</div>
<div class="t" style="left:146.00px;top:476.25px;line-height:10px;font-size:7.4px;color:#747474;transform:scaleX(0.825);">12/3/2024 2:20 PM</div>
<div class="t" style="left:221.50px;top:476.25px;line-height:10px;font-size:7.4px;color:#747474;transform:scaleX(0.835);">WinRAR archive</div>
<div class="t r" style="right:380.40px;top:476.25px;line-height:10px;font-size:7.4px;color:#747474;transform:scaleX(0.776);">67,622 KB</div>
<svg class="b" style="left:3px;top:493px" width="6" height="5" viewBox="0 0 6 5"><path d="M0.6 1.2L3 3.6L5.4 1.2" stroke="#888" stroke-width="0.6" fill="none"/></svg>
<div class="t" style="left:11.00px;top:489.75px;line-height:12px;font-size:8.3px;color:#1e3287;transform:scaleX(0.920);">A long time ago (92)</div>
<div class="b" style="left:88px;top:495px;width:608px;height:1px;background:#e2e2e2"></div>
</div>
<div class="b" style="left:856px;top:43px;width:10px;height:491px;background:#f0f0f0"></div>
<div class="b" style="left:864px;top:43px;width:2px;height:491px;background:#f7f7f7"></div>
<div class="b" style="left:856px;top:52px;width:8px;height:140px;background:#cdcdcd"></div>
<svg class="b" style="left:857px;top:45px" width="6" height="5" viewBox="0 0 6 5"><path d="M0.8 3.6L3 1.4L5.2 3.6" stroke="#444" stroke-width="0.9" fill="none"/></svg>
<svg class="b" style="left:857px;top:527px" width="6" height="5" viewBox="0 0 6 5"><path d="M0.8 1.2L3 3.4L5.2 1.2" stroke="#444" stroke-width="0.9" fill="none"/></svg>
<div class="t" style="left:908.80px;top:284.05px;line-height:10px;font-size:7.4px;color:#747474;transform:scaleX(0.840);">No preview available.</div>
<div class="t" style="left:9.80px;top:535.35px;line-height:10px;font-size:7.4px;color:#2a2a5a;transform:scaleX(0.816);">130 items</div>
<div class="b" style="left:41px;top:535px;width:1px;height:9px;background:#f0f0f0"></div>
<div class="t" style="left:47.30px;top:535.35px;line-height:10px;font-size:7.4px;color:#2a2a5a;transform:scaleX(0.816);">1 item selected  3.22 MB</div>
<div class="b" style="left:118px;top:535px;width:1px;height:9px;background:#f0f0f0"></div>
<div class="b" style="left:985px;top:534px;width:12px;height:12px;background:#cce8ff;border:1px solid #7ec0ee;box-sizing:border-box"></div>
<svg class="b" style="left:987px;top:536px" width="8" height="8" viewBox="0 0 8 8"><rect x="0.5" y="0.5" width="2" height="7" fill="#fff" stroke="#888" stroke-width="0.5"/><path d="M4 1.5H7.5M4 4H7.5M4 6.5H7.5" stroke="#9ab" stroke-width="0.6"/></svg>
<svg class="b" style="left:998px;top:536px" width="8" height="8" viewBox="0 0 8 8"><rect x="0.5" y="1" width="7" height="6" fill="#fff" stroke="#888" stroke-width="0.6"/><rect x="1.2" y="3" width="5.6" height="3" fill="#3a7abf"/></svg>
<div class="b" style="left:2px;top:546px;width:1008px;height:2px;background:#d9dce6"></div>
<div class="b" style="left:2px;top:546px;width:26px;height:2px;background:#cfd4e0"></div>
<div class="b" style="left:322px;top:76.5px;width:130px;height:292px;background:#eeeeee;border:1px solid #e2e2e2;border-right-color:#f6f6f6;border-bottom-color:#f6f6f6;box-sizing:border-box;box-shadow:1px 1px 0.6px #8a8a8a"></div>
<div class="b" style="left:323px;top:172px;width:128px;height:11px;background:#ffffff"></div>
<div class="t" style="left:340.00px;top:80.75px;line-height:10px;font-size:7.4px;color:#111;transform:scaleX(0.815);font-weight:bold;">Open</div>
<svg class="b" style="left:326.8px;top:92px" width="9" height="8" viewBox="0 0 9 8"><circle cx="4.5" cy="4" r="3.9" fill="#1da1e8"/><text x="4.5" y="6.3" font-size="6" font-weight="bold" text-anchor="middle" fill="#fff" font-family="Liberation Sans">S</text></svg>
<div class="t" style="left:340.00px;top:92.25px;line-height:10px;font-size:7.4px;color:#111;transform:scaleX(0.827);">Share with Skype</div>
<svg class="b" style="left:326.8px;top:103px" width="9" height="9" viewBox="0 0 9 9"><rect x="0.5" y="1" width="7" height="7.5" fill="#fff" stroke="#888" stroke-width="0.7"/><rect x="1.5" y="4.5" width="5" height="3" fill="#8cd04a"/><path d="M3 6L7.5 1" stroke="#e89a20" stroke-width="1.2"/><circle cx="8" cy="0.7" r="0.6" fill="#c03030"/></svg>
<div class="t" style="left:340.00px;top:103.75px;line-height:10px;font-size:7.4px;color:#111;transform:scaleX(0.841);">Edit with Notepad++</div>
<svg class="b" style="left:326.8px;top:115px" width="9" height="8" viewBox="0 0 9 8"><rect x="0.5" y="0.5" width="4.5" height="5" fill="#7ab8ec"/><rect x="3.5" y="2.5" width="5" height="5.5" fill="#2a86d8"/><path d="M1 3H3.5" stroke="#fff" stroke-width="0.6"/></svg>
<div class="t" style="left:340.00px;top:115.35px;line-height:10px;font-size:7.4px;color:#111;transform:scaleX(0.824);">Compare using MobaDiff</div>
<svg class="b" style="left:326.8px;top:126px" width="9" height="9" viewBox="0 0 9 9"><path d="M1 0.5H5L7 2.5V8.5H1Z" fill="#8cc4f0"/><path d="M3 8L7.5 3.5" stroke="#e8901a" stroke-width="1.1"/></svg>
<div class="t" style="left:340.00px;top:126.85px;line-height:10px;font-size:7.4px;color:#111;transform:scaleX(0.820);">Edit with MobaTextEditor</div>
<svg class="b" style="left:326.8px;top:138px" width="10" height="9" viewBox="0 0 10 9"><ellipse cx="5" cy="4.5" rx="4.2" ry="3.8" fill="#fff"/><path d="M2.2 1.6C0.6 3 0.6 6 2.4 7.4L1.6 8.4C3.5 8.4 5.5 8.5 7 8" stroke="#1a6ae8" stroke-width="0.8" fill="none"/><path d="M2.5 3.8H4L2.5 5.6H4.2M5 4.2V5.6M5.8 3.4V5.6M6.6 4.2C7.6 4 7.8 5.6 6.8 5.6C6 5.6 6 4.2 6.6 4.2" stroke="#1a6ae8" stroke-width="0.5" fill="none"/></svg>
<div class="t" style="left:340.00px;top:138.45px;line-height:10px;font-size:7.4px;color:#111;transform:scaleX(0.826);">Share with Zalo</div>
<svg class="b" style="left:326.8px;top:150px" width="9" height="8" viewBox="0 0 9 8"><rect x="0" y="0" width="9" height="2.8" fill="#c02656"/><rect x="0" y="2.8" width="9" height="2.5" fill="#4444b0"/><rect x="0" y="5.3" width="9" height="2.7" fill="#20903a"/><rect x="0" y="2.6" width="9" height="0.5" fill="#6a2040" opacity="0.6"/><rect x="0" y="5.1" width="9" height="0.5" fill="#203a60" opacity="0.6"/><rect x="3.3" y="0" width="2.4" height="8" fill="#e8641c"/><rect x="3.6" y="2.9" width="1.8" height="2.2" fill="#fff"/></svg>
<div class="t" style="left:340.00px;top:149.95px;line-height:10px;font-size:7.4px;color:#111;transform:scaleX(0.799);">Open with WinRAR</div>
<svg class="b" style="left:326.8px;top:161px" width="9" height="8" viewBox="0 0 9 8"><rect x="0" y="0" width="9" height="2.8" fill="#c02656"/><rect x="0" y="2.8" width="9" height="2.5" fill="#4444b0"/><rect x="0" y="5.3" width="9" height="2.7" fill="#20903a"/><rect x="0" y="2.6" width="9" height="0.5" fill="#6a2040" opacity="0.6"/><rect x="0" y="5.1" width="9" height="0.5" fill="#203a60" opacity="0.6"/><rect x="3.3" y="0" width="2.4" height="8" fill="#e8641c"/><rect x="3.6" y="2.9" width="1.8" height="2.2" fill="#fff"/></svg>
<div class="t" style="left:340.00px;top:161.55px;line-height:10px;font-size:7.4px;color:#111;transform:scaleX(0.847);">Extract files...</div>
<svg class="b" style="left:326.8px;top:173px" width="9" height="8" viewBox="0 0 9 8"><rect x="0" y="0" width="9" height="2.8" fill="#c02656"/><rect x="0" y="2.8" width="9" height="2.5" fill="#4444b0"/><rect x="0" y="5.3" width="9" height="2.7" fill="#20903a"/><rect x="0" y="2.6" width="9" height="0.5" fill="#6a2040" opacity="0.6"/><rect x="0" y="5.1" width="9" height="0.5" fill="#203a60" opacity="0.6"/><rect x="3.3" y="0" width="2.4" height="8" fill="#e8641c"/><rect x="3.6" y="2.9" width="1.8" height="2.2" fill="#fff"/></svg>
<div class="t" style="left:340.00px;top:173.05px;line-height:10px;font-size:7.4px;color:#111;transform:scaleX(0.820);">Extract Here</div>
<svg class="b" style="left:326.8px;top:184px" width="9" height="8" viewBox="0 0 9 8"><rect x="0" y="0" width="9" height="2.8" fill="#c02656"/><rect x="0" y="2.8" width="9" height="2.5" fill="#4444b0"/><rect x="0" y="5.3" width="9" height="2.7" fill="#20903a"/><rect x="0" y="2.6" width="9" height="0.5" fill="#6a2040" opacity="0.6"/><rect x="0" y="5.1" width="9" height="0.5" fill="#203a60" opacity="0.6"/><rect x="3.3" y="0" width="2.4" height="8" fill="#e8641c"/><rect x="3.6" y="2.9" width="1.8" height="2.2" fill="#fff"/></svg>
<div class="t" style="left:340.00px;top:184.65px;line-height:10px;font-size:7.4px;color:#111;transform:scaleX(0.823);">Extract to &quot;Office 2021\&quot;</div>
<div class="t" style="left:340.00px;top:196.15px;line-height:10px;font-size:7.4px;color:#111;transform:scaleX(0.815);">7-Zip</div>
<svg class="b" style="left:440.5px;top:196px" width="6" height="9" viewBox="0 0 6 9"><path d="M1 0.8L4.6 4.5L1 8.2" stroke="#6a6a7a" stroke-width="0.75" fill="none"/></svg>
<svg class="b" style="left:326.8px;top:207px" width="9" height="9" viewBox="0 0 9 9"><path d="M0.8 3.2V7.8H7.2V6" stroke="#333" stroke-width="0.75" fill="none"/><path d="M2.3 6.2C2.6 4.2 4 3.2 5.6 3.2V1.6L8.3 3.9L5.6 6.2V4.6C4.4 4.6 3.2 5.1 2.3 6.2Z" fill="none" stroke="#333" stroke-width="0.65" stroke-linejoin="round"/></svg>
<div class="t" style="left:340.00px;top:207.65px;line-height:10px;font-size:7.4px;color:#111;transform:scaleX(0.822);">Share</div>
<div class="t" style="left:340.00px;top:219.25px;line-height:10px;font-size:7.4px;color:#111;transform:scaleX(0.827);">Open with</div>
<svg class="b" style="left:440.5px;top:219px" width="6" height="9" viewBox="0 0 6 9"><path d="M1 0.8L4.6 4.5L1 8.2" stroke="#6a6a7a" stroke-width="0.75" fill="none"/></svg>
<div class="t" style="left:340.00px;top:234.45px;line-height:10px;font-size:7.4px;color:#111;transform:scaleX(0.832);">Give access to</div>
<svg class="b" style="left:440.5px;top:234px" width="6" height="9" viewBox="0 0 6 9"><path d="M1 0.8L4.6 4.5L1 8.2" stroke="#6a6a7a" stroke-width="0.75" fill="none"/></svg>
<svg class="b" style="left:326.8px;top:245px" width="10" height="9" viewBox="0 0 10 9"><defs><linearGradient id="sg" x1="0" y1="1" x2="1" y2="0"><stop offset="0" stop-color="#3040e8"/><stop offset="0.5" stop-color="#28a8e8"/><stop offset="1" stop-color="#28c040"/></linearGradient></defs><path d="M0.6 8.4H3.2L9.4 1H6.8Z" fill="url(#sg)"/></svg>
<div class="t" style="left:340.00px;top:246.05px;line-height:10px;font-size:7.4px;color:#111;transform:scaleX(0.835);">Scan for threats</div>
<div class="t" style="left:340.00px;top:261.35px;line-height:10px;font-size:7.4px;color:#111;transform:scaleX(0.839);">Restore previous versions</div>
<div class="t" style="left:340.00px;top:276.65px;line-height:10px;font-size:7.4px;color:#111;transform:scaleX(0.825);">Send to</div>
<svg class="b" style="left:440.5px;top:276px" width="6" height="9" viewBox="0 0 6 9"><path d="M1 0.8L4.6 4.5L1 8.2" stroke="#6a6a7a" stroke-width="0.75" fill="none"/></svg>
<div class="t" style="left:340.00px;top:291.85px;line-height:10px;font-size:7.4px;color:#111;transform:scaleX(0.800);">Cut</div>
<div class="t" style="left:340.00px;top:303.45px;line-height:10px;font-size:7.4px;color:#111;transform:scaleX(0.815);">Copy</div>
<div class="t" style="left:340.00px;top:318.65px;line-height:10px;font-size:7.4px;color:#111;transform:scaleX(0.835);">Create shortcut</div>
<div class="t" style="left:340.00px;top:330.15px;line-height:10px;font-size:7.4px;color:#111;transform:scaleX(0.822);">Delete</div>
<div class="t" style="left:340.00px;top:341.65px;line-height:10px;font-size:7.4px;color:#111;transform:scaleX(0.828);">Rename</div>
<div class="t" style="left:340.00px;top:356.75px;line-height:10px;font-size:7.4px;color:#111;transform:scaleX(0.832);">Properties</div>
<div class="b" style="left:327px;top:231px;width:119px;height:1px;background:#a0a0a0"></div>
<div class="b" style="left:327px;top:258px;width:119px;height:1px;background:#dcdcdc"></div>
<div class="b" style="left:327px;top:273px;width:119px;height:1px;background:#a8a8a8"></div>
<div class="b" style="left:327px;top:288px;width:119px;height:1px;background:#959595"></div>
<div class="b" style="left:327px;top:315px;width:119px;height:1px;background:#a8a8a8"></div>
<div class="b" style="left:327px;top:353px;width:119px;height:1px;background:#959595"></div>
<svg class="b" style="left:0;top:0" width="1010" height="548" viewBox="0 0 1010 548"><rect x="323" y="171.3" width="64.8" height="12" rx="1.5" fill="none" stroke="#ff0000" stroke-width="3.6"/><path d="M577 138L432 172" stroke="#ff0000" stroke-width="4.2" stroke-linecap="round"/><path d="M429.5 159L408 177.2L436.5 183.5Z" fill="#ff0000" stroke="#ff0000" stroke-width="2" stroke-linejoin="round"/></svg>
</body></html>
